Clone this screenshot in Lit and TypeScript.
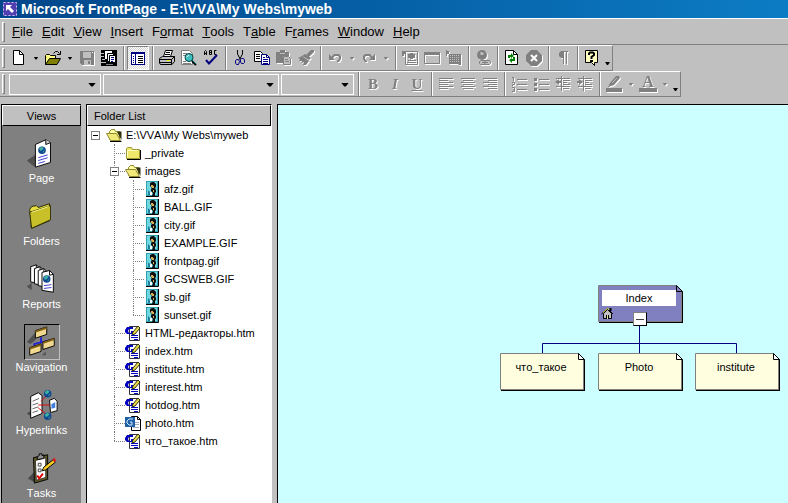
import { LitElement, html, svg, css, nothing, type SVGTemplateResult, type TemplateResult } from "lit";
import { customElement, property } from "lit/decorators.js";
import { classMap } from "lit/directives/class-map.js";

/* ---------- 16 x 16 toolbar glyphs ---------- */
const page16 = (x: number, y: number, w: number, h: number) => svg`
  <path d="M${x} ${y}H${x + w - 4}L${x + w} ${y + 4}V${y + h}H${x}Z" fill="#fff" stroke="#000"/>
  <path d="M${x + w - 4} ${y}V${y + 4}H${x + w}" fill="none" stroke="#000"/>`;

const lines = (rows: number[][], color: string) =>
  rows.map(([x, y, w]) => svg`<rect x=${x} y=${y} width=${w} height="1" fill=${color}/>`);

const G = "#808080";

const glyphs: Record<string, SVGTemplateResult> = {
  new: page16(2.5, 0.5, 10, 14),
  open: svg`
    <path d="M0 14V5H1V4H5V5H10V8H5L1 14Z" fill="#ffff80"/>
    <path d="M.5 14.5V5.5L1.5 4.5H4.5L5.5 5.5H10.5V8.5" fill="none" stroke="#000"/>
    <path d="M.5 14.5L4.5 8.5H15.5L12 14.5Z" fill="#808000" stroke="#000"/>
    <path d="M8.5 3.5L10.5 1.5H12.5L14.5 3.5M15.5 1V4.5H12" fill="none" stroke="#000"/>`,
  save: svg`
    <path d="M1 1H15V15H3L1 13Z" fill="${G}"/>
    <rect x="4" y="2" width="8" height="6" fill="#c0c0c0"/>
    <rect x="5" y="10" width="7" height="5" fill="#c0c0c0"/>
    <rect x="9" y="11" width="2" height="3" fill="${G}"/>
    <rect x="13" y="2" width="1" height="1" fill="#fff"/>`,
  publish: svg`
    <rect x="0" y="0" width="16" height="16" fill="#000"/>
    ${lines([[0, 3, 3], [0, 6, 3], [1, 9, 3], [0, 12, 5]], "#c0c0c0")}
    <path d="M4 1H11V9H4Z" fill="#fff"/><path d="M6.5 3.5H12.5V11.5H6.5Z" fill="#fff" stroke="#000"/>
    <path d="M8.5 5.5H14.5V12.5H8.5Z" fill="#fff" stroke="#000"/>
    ${lines([[10, 7, 3], [10, 9, 3], [10, 11, 2]], "#000080")}
    ${lines([[5, 14, 7]], "#808080")}`,
  list: svg`
    <rect x="1.5" y="2.5" width="13" height="12" fill="#fff" stroke="#000080"/>
    <rect x="1" y="2" width="14" height="2" fill="#000080"/>
    <rect x="5" y="4" width="1" height="10" fill="#000080"/>
    ${lines([[3, 6, 1], [3, 8, 1], [3, 10, 1], [3, 12, 1]], "#000080")}
    ${lines([[8, 6, 5], [8, 8, 5], [8, 10, 5], [8, 12, 5]], "#000")}`,
  print: svg`
    <path d="M4.5 6.5L6.500 .5H13.500L11.500 6.500Z" fill="#fff" stroke="#000"/>
    ${lines([[7, 2, 4], [6, 4, 5]], "#000")}
    <path d="M.5 8.5L3.5 6.5H15.5V11.5L13 14.5H1.5L.5 13Z" fill="#c0c0c0" stroke="#000"/>
    <path d="M.5 9.5H12.5V14M12.5 9.5L15.5 6.5M1 12.5H12" fill="none" stroke="#000"/>
    <rect x="8" y="10" width="3" height="1" fill="#ff0"/>`,
  preview: svg`
    <path d="M.5 .5H8.5L11.5 3.5V14.5H.5Z" fill="#fff" stroke="#808080"/>
    ${lines([[2, 3, 4], [2, 5, 2], [2, 11, 3], [2, 13, 8]], "#808080")}
    <circle cx="8" cy="7.5" r="4" fill="#40c0c0" stroke="#004040"/>
    <path d="M5.5 7L8 5" stroke="#fff"/>
    <path d="M11 11L15 15" stroke="#000" stroke-width="2"/><path d="M11 10L15 14" stroke="#008080"/>`,
  spell: svg`
    <path d="M1.5 5V1.5L2.5 .5L3.5 1.5V5M1.5 3.5H3.5M6.5 .5V4.5M6.5 .5H8.5V4.5H6.5M6.5 2.5H8.5M13.5 .5H11.5V4.5H13.5" fill="none" stroke="#000"/>
    <path d="M3 10L6 13.5L14 5" fill="none" stroke="#000080" stroke-width="2"/>`,
  cut: svg`
    <path d="M5.5 0V4L8.5 9.5M10.5 0V4L7.5 9.5" fill="none" stroke="#000"/>
    <path d="M4.5 9.5H6.5L7.5 11.5L6.5 14.5H4.5L3.5 13V11Z" fill="none" stroke="#000080"/>
    <path d="M9.5 8.5H11.5L12.5 10V12.5L11.5 13.5H9.5L8.5 12V9.5Z" fill="none" stroke="#000080"/>`,
  copy: svg`
    <path d="M.5 1.5H6.5L8.5 3.5V11.5H.5Z" fill="#fff" stroke="#000"/>
    ${lines([[2, 4, 4], [2, 6, 4], [2, 8, 4]], "#000")}
    <path d="M7.5 4.5H12.5L15.5 7.5V14.5H7.5Z" fill="#fff" stroke="#000080"/>
    <path d="M12.5 4.5V7.5H15.5" fill="none" stroke="#000080"/>
    ${lines([[9, 7, 2], [9, 9, 5], [9, 11, 5], [9, 13, 5]], "#000080")}`,
  paste: svg`
    <path d="M0 2H4V0H9V2H13V6H7V13H0Z" fill="${G}"/>
    <rect x="4" y="3" width="5" height="1" fill="#c0c0c0"/>
    <path d="M7.5 6.5H12.5L14.5 8.5V14.5H7.5Z" fill="#c0c0c0" stroke="${G}"/>
    ${lines([[9, 9, 3], [9, 11, 4]], G)}`,
  brush: svg`
    <path d="M13 0H16V2L11 7L8 5Z" fill="${G}"/>
    <path d="M7 4L13 8L11 10L4 6Z" fill="${G}"/>
    <path d="M4 6L11 11L8 15L5 15L6 12L3 13L4 11L1 11L2 9L0 8Z" fill="${G}"/>`,
  undo: svg`<path d="M2 4V10H8L6 8L8 6H11L12 7V9L10 11V12H12L14 9V6L12 4H7L4.500 6.500Z" fill="${G}"/>`,
  redo: svg`<path d="M14 4V10H8L10 8L8 6H5L4 7V9L6 11V12H4L2 9V6L4 4H9L11.500 6.500Z" fill="${G}"/>`,
  component: svg`
    <path d="M3.5 1.5H15.5V14.5H3.5Z" fill="none" stroke="${G}"/>
    <path d="M0 1H3V4H2V6H0Z" fill="${G}"/>
    <path d="M8 3H11V4H13V8H11V9H8V8H6V4H8Z" fill="${G}"/>
    ${lines([[6, 10, 8], [5, 12, 9]], G)}`,
  form: svg`
    <path d="M.5 2.5H15.5V13.5H.5Z" fill="none" stroke="${G}"/>
    <rect x="0" y="2" width="16" height="3" fill="${G}"/>`,
  picture: svg`
    <path d="M0 0H1V1H3V4H1V6H0Z" fill="${G}"/>
    <rect x="3" y="4" width="12" height="10" fill="${G}"/>
    <path d="M4 5.5H14M4 7.5H14M4 9.5H14M4 11.5H14" stroke="#c0c0c0" stroke-dasharray="1 1"/>
    <path d="M12 14L15 11V15H13Z" fill="${G}"/>`,
  hyperlink: svg`
    <circle cx="7" cy="5" r="5" fill="${G}"/>
    <path d="M5 3L6 2L9 3L8 5L6 5Z" fill="#c0c0c0"/>
    <path d="M5.500 10.500H10V14.500H5.500L4.500 13.500V11.500ZM10 10.500H14.500L15.500 11.500V13.500L14.500 14.500H10" fill="#c0c0c0" stroke="${G}"/>
    <path d="M7 12.5H13" stroke="${G}"/>`,
  refresh: svg`
    ${page16(1.5, 0.5, 12, 14)}
    <path d="M4 8V5H7V3L10 6L7 8V7H6V8ZM11 7V11H8V13L5 10L8 8V9H9V7Z" fill="#008000"/>`,
  stop: svg`
    <path d="M5 0H11L16 5V11L11 16H5L0 11V5Z" fill="${G}"/>
    <path d="M5 5L11 11M11 5L5 11" stroke="#fff" stroke-width="2"/>`,
  para: svg`<path d="M6 1H13V2H12V14H11V2H9V14H8V8H6L4 6V3Z" fill="${G}"/>`,
  help: svg`
    <path d="M1.500 .5H13.500V12.500H10.500V15.500L7.500 12.500H1.500Z" fill="#ffffc0" stroke="#000"/>
    <path d="M5 5V3.500L6 2.500H9L10 3.500V5L7.500 7V9" fill="none" stroke="#000" stroke-width="2"/>
    <rect x="6" y="10" width="3" height="2" fill="#000"/>`,
  left: svg`${lines([[1, 2, 14], [1, 4, 9], [1, 6, 14], [1, 8, 9], [1, 10, 14], [1, 12, 9]], G)}`,
  center: svg`${lines([[1, 2, 14], [3, 4, 10], [1, 6, 14], [3, 8, 10], [1, 10, 14], [3, 12, 10]], G)}`,
  right: svg`${lines([[1, 2, 14], [6, 4, 9], [1, 6, 14], [6, 8, 9], [1, 10, 14], [6, 12, 9]], G)}`,
  numbers: svg`
    <path d="M1 1.500H2.500V5M1 6.500H3.500V8.500H1.500V10M1 11.500H3.500V15.500H1M2 13.500H3" fill="none" stroke="${G}"/>
    ${lines([[6, 3, 10], [6, 8, 10], [6, 13, 10]], G)}`,
  bullets: svg`
    <path d="M1 2H4V5H1ZM1 7H4V10H1ZM1 12H4V15H1Z" fill="${G}"/>
    ${lines([[6, 3, 10], [6, 8, 10], [6, 13, 10]], G)}`,
  outdent: svg`
    ${lines([[1, 2, 14], [8, 4, 7], [8, 6, 4], [8, 8, 7], [1, 10, 14], [8, 12, 6]], G)}
    <path d="M4 3V9L0 6Z" fill="${G}"/><rect x="6" y="0" width="1" height="15" fill="${G}"/>
    <rect x="3" y="5" width="3" height="2" fill="${G}"/>`,
  indent: svg`
    ${lines([[1, 2, 14], [8, 4, 7], [8, 6, 4], [8, 8, 7], [1, 10, 14], [8, 12, 6]], G)}
    <path d="M2 3V9L6 6Z" fill="${G}"/><rect x="6" y="0" width="1" height="15" fill="${G}"/>
    <rect x="0" y="5" width="3" height="2" fill="${G}"/>`,
  highlight: svg`
    <path d="M4 7L10 0H13L14 2L8 9L2 11Z" fill="${G}"/><path d="M6 7L11 2" stroke="#c0c0c0"/>
    <rect x="0" y="12" width="16" height="4" fill="${G}"/>`,
};

/* ---------- 16 x 16 tree glyphs ---------- */
const treeGlyphs: Record<string, SVGTemplateResult> = {
  openFolder: svg`
    <path d="M3.500 12.500V4.500L5.500 2.500H8.500L9.500 4.500H13.500V12.500Z" fill="#ffffa0" stroke="#908830"/>
    <path d="M.5 6.500H10.500L14.500 13.500H4.500Z" fill="#f0e878" stroke="#908830"/>
    <path d="M11 5L15.500 13V4.500H12Z" fill="#303010"/>
    <path d="M4 14.500H15.500" stroke="#000"/>`,
  folder: svg`
    <path d="M1.5 13.5V3.5L2.5 2.5H6.5L7.5 4.5H14.5V13.5Z" fill="#f0e868" stroke="#a09830"/>
    <path d="M2 14.5H15.5V5" fill="none" stroke="#000"/>
    <path d="M2.5 12V5.5H13" fill="none" stroke="#ffffc0"/>`,
  gif: svg`
    <rect x="2.5" y=".5" width="11" height="14" fill="#70d8e0" stroke="#30a0b0"/>
    <path d="M14.500 0V15.500H2" fill="none" stroke="#000"/>
    <path d="M6 2L8 1H10L12 3V6L11 7L12 9V11L11 12V15H8L9 12L7 10V8L8 7L6 5Z" fill="#101010"/>
    <path d="M7 4H9V5H10V7H8V6H7ZM9 9H10V11H9Z" fill="#d8b050"/>
    <path d="M4 9L6 11V14H4Z" fill="#2080a0"/><path d="M6 11H8V14H6Z" fill="#fff"/>`,
  htm: svg`
    <path d="M4.5 1.5H13L14.5 3V15.5H4.5Z" fill="#fff" stroke="#303040"/>
    <path d="M6 10.5H13M6 12.5H13M9 14.5H13" stroke="#0000c0"/>
    <path d="M0 5L2 2H8V4H4L3 6L4 8H6V6H8V9H2L0 7Z" fill="#0000c0"/>
    <path d="M7 10L8 7L13 1L15 3L10 9Z" fill="#e8d848" stroke="#303010"/>`,
  photo: svg`
    <path d="M6.5 1.5H12.5L15.5 4.5V15.5H6.5Z" fill="#fff" stroke="#000"/>
    <path d="M12.5 1.5V4.5H15.5" fill="none" stroke="#000"/>
    <path d="M10 7.5H14M10 9.5H14M8 12.5H14" stroke="#a0b0c0"/>
    <rect x="0" y="2" width="10" height="10" fill="#2060a8"/>
    <path d="M8 4H4L2 6V8L4 10H7V7H5" fill="none" stroke="#d0e8ff"/>`,
};

/* ---------- 36 x 36 view bar pictures ---------- */
const shade = svg`<path d="M2 26L12 19V32L9 32Z" fill="#505050"/>`;
const globe = (x: number, y: number) => svg`
  <circle cx=${x} cy=${y} r="4" fill="#104890"/>
  <path d="M${x - 3} ${y - 2}L${x} ${y - 4}L${x + 2} ${y - 2}L${x} ${y}L${x - 2} ${y + 1}Z" fill="#40b0a0"/>
  <path d="M${x + 1} ${y + 1}L${x + 3} ${y}L${x + 1} ${y + 3}Z" fill="#40b0a0"/>`;
const box = (x: number, y: number) => svg`
  <path d="M${x} ${y + 4}L${x + 12} ${y}V${y + 8}L${x} ${y + 12}Z" fill="#f0d890" stroke="#000"/>
  <path d="M${x} ${y + 5}L${x + 12} ${y + 1}" stroke="#806010" stroke-width="2"/>`;
const sheet = (x: number, y: number) => svg`
  <path d="M${x} ${y + 2}L${x + 6} ${y}L${x + 9} ${y + 3}V${y + 20}L${x} ${y + 18}Z" fill="#fff" stroke="#000"/>
  <path d="M${x + 6} ${y}V${y + 4}L${x + 9} ${y + 3}" stroke="#000"/>`;

const pictures: Record<string, SVGTemplateResult> = {
  Page: svg`
    ${shade}
    <path d="M11 9L22 4L27 7V28L11 33Z" fill="#fff" stroke="#000"/>
    <path d="M22 4V9L27 7" fill="#d0d0d0" stroke="#000"/>
    ${globe(18, 15)}
    <path d="M14 23L24 20M14 26L24 23M14 29L21 27" stroke="#3838d0"/>`,
  Folders: svg`
    <path d="M5 29L9 25V31Z" fill="#484848"/>
    <path d="M5 11L7 8L12 7L14 9L26 5V23L7 31Z" fill="#e8e040" stroke="#202000"/>
    <path d="M5 14L27 7V22L7 31Z" fill="#c8c028" stroke="#303000"/>
    <path d="M7 14L25 8" stroke="#ffff90"/>`,
  Reports: svg`
    <path d="M2 26L7 22V30Z" fill="#505050"/>
    ${sheet(6, 3)}${sheet(10, 5)}${sheet(14, 7)}
    <path d="M18 11L26 9L30 13V32L18 30Z" fill="#fff" stroke="#000"/>
    <path d="M26 9V14L30 13" stroke="#000"/>
    ${globe(23, 18)}
    <path d="M20 25L28 24M20 28L28 27" stroke="#3838d0"/>`,
  Navigation: svg`
    <path d="M2 18L11 8V16L6 20ZM18 32L22 28V32Z" fill="#505050"/>
    <path d="M17 13V18M10 23V20L27 16V19" stroke="#2020d0" stroke-width="2" fill="none"/>
    ${box(11, 2)}${box(5, 20)}${box(19, 14)}`,
  Hyperlinks: svg`
    <path d="M2 27L8 23V31Z" fill="#484848"/>
    <path d="M6 9L14 5L18 8V27L6 32Z" fill="#fff" stroke="#000"/>
    <path d="M8 14L15 11M8 18L14 16M8 22L14 20M8 26L14 24" stroke="#606060"/>
    <path d="M14 18H27M14 21L24 29M17 14L23 8" stroke="#e00000"/>
    <path d="M26 13L31 11L34 14V24L27 26Z" fill="#fff" stroke="#000"/>
    <path d="M28 17L32 15V21L28 22Z" fill="#4080e0"/>
    ${globe(24, 6)}${globe(24, 30)}`,
  Tasks: svg`
    <path d="M3 29L10 22V33Z" fill="#484848"/>
    <path d="M9 7L24 4V30L10 34Z" fill="#605820" stroke="#000"/>
    <path d="M11 10L22 7V28L12 31Z" fill="#fff" stroke="#303030"/>
    <path d="M13 9V6L15 5V3H18V5L20 4V8Z" fill="#909090" stroke="#000"/>
    <path d="M14 13H17V16H14ZM14 19H17V22H14Z" fill="none" stroke="#404040"/>
    <path d="M13 26L15 29L19 24" fill="none" stroke="#e00000" stroke-width="2"/>
    <path d="M18 21L20 17L30 9L32 12L22 20Z" fill="#f0c820" stroke="#000"/>
    <path d="M29 9L31 7L33 10L31 12Z" fill="#e02020"/>`,
};

@customElement("tool-button")
export class ToolButton extends LitElement {
  @property() glyph = "";
  @property() label = "";
  @property({ type: Boolean }) off = false;
  @property({ type: Boolean }) pressed = false;

  static styles = css`
    :host { display: block; flex: none; }
    .btn {
      display: grid; place-items: center; width: 22px; height: 24px; padding: 0;
      border: 1px solid transparent; background: none; color: #000;
    }
    .off { color: #808080; }
    .off .art, .off .letter { filter: drop-shadow(1px 1px 0 #fff); }
    .pressed {
      border-color: #808080 #fff #fff #808080;
      background: repeating-conic-gradient(#fff 0 25%, #d4d4d4 0 50%) 0 0 / 2px 2px;
    }
    .art { display: block; width: 16px; height: 16px; }
    .letter { font: bold 15px/16px "Liberation Serif", serif; }
    .i { font-style: italic; }
    .u { text-decoration: underline; }
    .a { border-bottom: 4px solid #808080; padding: 0 3px; line-height: 12px; font-size: 16px; }
  `;

  render() {
    const letters: Record<string, string> = { bold: "B", italic: "I", underline: "U", color: "A" };
    const letter = letters[this.glyph];
    return html`<button
      class=${classMap({ btn: true, off: this.off, pressed: this.pressed })}
      aria-label=${this.label} ?disabled=${this.off}>
      ${letter
        ? html`<span class=${classMap({ letter: true, i: letter === "I", u: letter === "U", a: letter === "A" })}>${letter}</span>`
        : html`<svg class="art" viewBox="0 0 16 16" fill="none" aria-hidden="true">${glyphs[this.glyph]}</svg>`}
    </button>`;
  }
}

type Tool = "|" | { g: string; label: string; off?: boolean; pressed?: boolean; menu?: boolean };
const t = (g: string, label: string, extra: object = {}): Tool => ({ g, label, ...extra });
const off = { off: true };

const standard: Tool[] = [
  t("new", "New page", { menu: true }), t("open", "Open", { menu: true }), t("save", "Save", off), t("publish", "Publish web"), "|",
  t("list", "Folder list", { pressed: true }), "|",
  t("print", "Print"), t("preview", "Preview in browser"), t("spell", "Spelling"), "|",
  t("cut", "Cut"), t("copy", "Copy"), t("paste", "Paste", off), t("brush", "Format painter", off), "|",
  t("undo", "Undo", { off: true, menu: true }), t("redo", "Redo", { off: true, menu: true }), "|",
  t("component", "Insert component", off), t("form", "Insert table", off), t("picture", "Insert picture", off), "|",
  t("hyperlink", "Hyperlink", off), "|", t("refresh", "Refresh"), t("stop", "Stop", off), "|",
  t("para", "Show all", off), "|", t("help", "Help"),
];

const formatting: Tool[] = [
  "|", t("bold", "Bold", off), t("italic", "Italic", off), t("underline", "Underline", off), "|",
  t("left", "Align left", off), t("center", "Center", off), t("right", "Align right", off), "|",
  t("numbers", "Numbering", off), t("bullets", "Bullets", off), t("outdent", "Decrease indent", off), t("indent", "Increase indent", off), "|",
  t("highlight", "Highlight color", { off: true, menu: true }), t("color", "Font color", { off: true, menu: true }),
];

/* [text before the access key, access key, rest] */
const menus = [
  ["", "F", "ile"], ["", "E", "dit"], ["", "V", "iew"], ["", "I", "nsert"], ["F", "o", "rmat"],
  ["", "T", "ools"], ["T", "a", "ble"], ["F", "r", "ames"], ["", "W", "indow"], ["", "H", "elp"],
];

interface TreeNode { name: string; icon: string; open?: boolean; children?: TreeNode[] }
const tree: TreeNode = {
  name: "E:\\VVA\\My Webs\\myweb", icon: "openFolder", open: true,
  children: [
    { name: "_private", icon: "folder" },
    {
      name: "images", icon: "openFolder", open: true,
      children: ["afz.gif", "BALL.GIF", "city.gif", "EXAMPLE.GIF", "frontpag.gif", "GCSWEB.GIF", "sb.gif", "sunset.gif"]
        .map((name) => ({ name, icon: "gif" })),
    },
    { name: "HTML-редакторы.htm", icon: "htm" },
    { name: "index.htm", icon: "htm" },
    { name: "institute.htm", icon: "htm" },
    { name: "interest.htm", icon: "htm" },
    { name: "hotdog.htm", icon: "htm" },
    { name: "photo.htm", icon: "photo" },
    { name: "что_такое.htm", icon: "htm" },
  ],
};

@customElement("app-root")
export class AppRoot extends LitElement {
  static styles = css`
    :host {
      display: flex; flex-direction: column; min-height: 100vh; background: #c0c0c0; color: #000;
      font: 11px/14px "Liberation Sans", Arial, sans-serif; font-kerning: none;
    }
    button, select { font: inherit; color: inherit; margin: 0; }
    .title {
      display: flex; align-items: center; gap: 4px; height: 18px; padding-left: 3px;
      background: linear-gradient(90deg, #00468a, #0c7cc4);
      color: #fff;
    }
    .title h1 { margin: 0; font-size: 14px; line-height: 18px; font-weight: bold; white-space: nowrap; }
    .logo { width: 14px; height: 14px; }

    .menubar { display: flex; align-items: center; gap: 1px; height: 25px; border-top: 1px solid #fff; border-bottom: 1px solid #808080; }
    .menubar button { border: 0; padding: 0 4px; background: none; font-size: 13px; line-height: 20px; }

    .bar {
      display: flex; align-items: center; align-self: flex-start; height: 24px;
      border: 1px solid #808080; border-color: #fff #808080 #808080 transparent; border-left: 0;
    }
    .grip { flex: none; box-sizing: border-box; width: 3px; height: 20px; margin: 0 3px 0 2px; border: 1px solid; border-color: #fff #808080 #808080 #fff; }
    .menubar .grip { margin-right: 2px; }
    .sep { flex: none; width: 2px; height: 24px; margin: 0 2px 0 3px; background: linear-gradient(90deg, #808080 50%, #fff 50%); }
    .drop { flex: none; width: 12px; height: 22px; padding: 0; border: 0; background: none; display: grid; place-items: center; }
    .drop:disabled { color: #808080; filter: drop-shadow(1px 1px 0 #fff); }
    .caret { width: 5px; height: 3px; background: currentColor; clip-path: polygon(0 0, 100% 0, 60% 100%, 40% 100%); }
    .more { width: 9px; box-sizing: border-box; align-items: end; padding-bottom: 4px; }

    .combo { position: relative; flex: none; box-sizing: border-box; height: 21px; margin: 0 1px; border: 1px solid #fff; }
    .combo select { appearance: none; width: 100%; height: 100%; border: 0; padding: 0 4px; background: none; border-radius: 0; }
    .combo .caret { position: absolute; right: 4px; top: 8px; width: 8px; height: 4px; pointer-events: none; }
    .style { width: 92px; }
    .face { width: 176px; }
    .size { width: 73px; }

    main { display: flex; flex: 1; margin-top: 7px; }
    .views {
      flex: none; display: flex; flex-direction: column; box-sizing: border-box; width: 80px; margin-left: 1px;
      border-left: 1px solid #000; border-top: 1px solid #000; background: #808080; color: #fff;
    }
    .head {
      margin: 0; padding: 3px 6px 2px; font-size: 11px; font-weight: normal; line-height: 14px; background: #c0c0c0; color: #000;
      border: 1px solid #fff; border-color: #fff #000 #000 #fff;
    }
    .views .head { text-align: center; }
    .viewlist { display: flex; flex-direction: column; gap: 12px; padding-top: 9px; }
    .viewlist button { display: flex; flex-direction: column; align-items: center; padding: 0; border: 0; background: none; line-height: 15px; }
    .pic { box-sizing: border-box; width: 36px; height: 36px; border: 1px solid transparent; }
    .current .pic { border-color: #000 #c0c0c0 #c0c0c0 #000; }

    .folders {
      flex: none; width: 184px; margin-left: 5px; background: #fff;
      border: 1px solid #000; border-bottom: 0; border-right-color: #fff;
    }
    ul { list-style: none; margin: 0; padding: 0; }
    .tree { padding: 0 0 0 4px; }
    .kids { padding-left: 34px; }
    .kids .kids { padding-left: 19px; }
    .row { display: flex; align-items: center; height: 18px; white-space: nowrap; }
    .node { position: relative; }
    .kids > .node::before {
      content: ""; position: absolute; left: -11px; top: 0; height: 100%; border-left: 1px dotted #808080;
    }
    .kids > .node:last-child::before { height: 9px; }
    .kids > .node::after {
      content: ""; position: absolute; left: -11px; top: 9px; width: 11px; border-top: 1px dotted #808080;
    }
    .twist {
      position: relative; z-index: 1; flex: none; box-sizing: border-box; width: 9px; height: 9px; padding: 0; margin-right: 6px;
      border: 1px solid #808080; background: linear-gradient(#000, #000) center / 5px 1px no-repeat #fff;
    }
    .kids .twist { margin-left: -15px; }
    .ticon { flex: none; width: 16px; height: 16px; margin-right: 4px; }

    .canvas { position: relative; flex: 1; overflow: hidden; margin-left: 5px; border-left: 1px solid #000; border-top: 1px solid #000; background: #ccffff; }
    .wires { position: absolute; left: 0; top: 0; width: 510px; height: 300px; }
    .card {
      position: absolute; box-sizing: border-box; width: 86px; height: 39px; padding: 0 4px 0 0; border: 0; background: none;
      display: grid; justify-items: center; align-content: start;
    }
    .card svg { position: absolute; left: 0; top: 0; width: 86px; height: 39px; }
    .card span { position: relative; margin-top: 7px; font-size: 11px; line-height: 14px; }
    .home span { width: 74px; margin-top: 5px; line-height: 16px; background: #fff; }
    .index { left: 320px; top: 180px; }
    .what { left: 222px; top: 248px; }
    .photo { left: 320px; top: 248px; }
    .inst { left: 417px; top: 248px; }
    .fold {
      position: absolute; left: 355px; top: 207px; width: 14px; height: 14px; padding: 0;
      border: 1px solid #808080; border-right-color: #000; border-bottom-color: #000;
      background: linear-gradient(#404040, #404040) center / 8px 1px no-repeat #fff;
    }
  `;

  private bar(tools: Tool[]) {
    return tools.map((x) => x === "|"
      ? html`<span class="sep"></span>`
      : html`<tool-button .glyph=${x.g} .label=${x.label} .off=${!!x.off} .pressed=${!!x.pressed}></tool-button>
          ${x.menu ? html`<button class="drop" aria-label="${x.label} options" ?disabled=${!!x.off}><span class="caret"></span></button>` : nothing}`);
  }

  private combo(kind: string, label: string) {
    return html`<label class="combo ${kind}"><select aria-label=${label}><option></option></select><span class="caret"></span></label>`;
  }

  private node(n: TreeNode): TemplateResult {
    return html`<li class="node">
      <div class="row">
        ${n.open ? html`<button class="twist" aria-label="Collapse ${n.name}"></button>` : nothing}
        <svg class="ticon" viewBox="0 0 16 16" fill="none" aria-hidden="true">${treeGlyphs[n.icon]}</svg>
        <span>${n.name}</span>
      </div>
      ${n.children ? html`<ul class="kids">${n.children.map((c) => this.node(c))}</ul>` : nothing}
    </li>`;
  }

  private card(cls: string, text: string, home = false) {
    return html`<button class=${classMap({ card: true, [cls]: true, home })}>
      <svg viewBox="0 0 86 39" fill="none" aria-hidden="true">
        <path d="M1 1H79L85 7V38H1Z" fill="#000"/>
        <path d="M.5 .5H78.5L83.5 5.5V36.5H.5Z" fill=${home ? "#8080c0" : "#ffffe0"} stroke="#808080"/>
        <path d="M78.5 .5V6.5H84" fill=${home ? "#8080c0" : "#fff"} stroke="#000"/>
        <path d="M78.5 .5L84.5 6.5V37.5H1" stroke="#000"/>
        ${home ? svg`
          <path d="M5.5 28.5L9.5 24.5L13.5 28.5V33.5H5.5Z" fill="#c0c0c0" stroke="#000"/>
          <path d="M3.5 29L9.5 23.5L15 29" stroke="#000"/>
          <path d="M5 27.5L9.5 23.5L11 25" stroke="#e0e040"/>
          <path d="M12.5 23V26" stroke="#000" stroke-width="2"/>
          <rect x="8" y="30" width="3" height="4" fill="#000"/><rect x="9" y="30" width="1" height="4" fill="#e0e0a0"/>` : nothing}
      </svg>
      <span>${text}</span>
    </button>`;
  }

  render() {
    return html`
      <header class="title">
        <svg class="logo" viewBox="0 0 14 14" fill="none" aria-hidden="true">
          <rect width="14" height="14" fill="#5040b0"/>
          <path d="M.5 .5H13.5V13.5H.5Z" stroke="#c8c0ff" stroke-dasharray="2 2"/>
          <path d="M3 3H9L7 5L11 9L9 11L5 7L3 9Z" fill="#fff"/>
        </svg>
        <h1>Microsoft FrontPage - E:\\VVA\\My Webs\\myweb</h1>
      </header>
      <nav class="menubar" aria-label="Menu">
        <span class="grip"></span>
        ${menus.map(([a, k, b]) => html`<button>${a}<u>${k}</u>${b}</button>`)}
      </nav>
      <div class="bar" role="toolbar" aria-label="Standard">
        <span class="grip"></span>${this.bar(standard)}
        <button class="drop more" aria-label="More buttons"><span class="caret"></span></button>
      </div>
      <div class="bar" role="toolbar" aria-label="Formatting">
        <span class="grip"></span>
        ${this.combo("style", "Style")}${this.combo("face", "Font")}${this.combo("size", "Font size")}
        ${this.bar(formatting)}
        <button class="drop more" aria-label="More buttons"><span class="caret"></span></button>
      </div>
      <main>
        <nav class="views" aria-label="Views">
          <h2 class="head">Views</h2>
          <div class="viewlist">
            ${Object.keys(pictures).map((v) => html`<button class=${classMap({ current: v === "Navigation" })}>
              <svg class="pic" viewBox="0 0 36 36" fill="none" aria-hidden="true">${pictures[v]}</svg>${v}
            </button>`)}
          </div>
        </nav>
        <section class="folders">
          <h2 class="head">Folder List</h2>
          <ul class="tree">${this.node(tree)}</ul>
        </section>
        <section class="canvas" aria-label="Navigation">
          <svg class="wires" viewBox="0 0 510 300" fill="none" aria-hidden="true">
            <path d="M361.5 220V248M264.5 248V238.5H458.5V248" stroke="#000080"/>
          </svg>
          ${this.card("index", "Index", true)}
          ${this.card("what", "что_такое")}${this.card("photo", "Photo")}${this.card("inst", "institute")}
          <button class="fold" aria-label="Collapse"></button>
        </section>
      </main>`;
  }
}
